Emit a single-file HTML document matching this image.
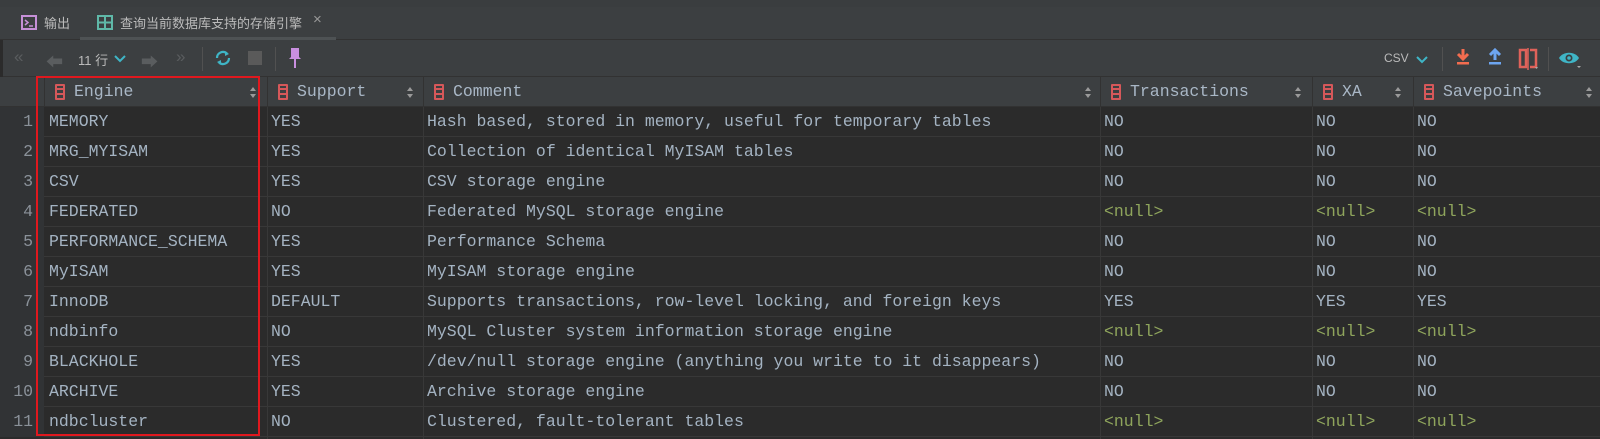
<!DOCTYPE html>
<html><head><meta charset="utf-8"><style>
*{margin:0;padding:0;box-sizing:border-box}
body{width:1600px;height:439px;background:#2b2b2b;overflow:hidden;position:relative;font-family:"Liberation Sans","Noto Sans CJK SC",sans-serif;color:#a9b7c6}
.abs{position:absolute}
#tabs{left:0;top:0;width:1600px;height:40px;background:#3c3f41;border-bottom:1px solid #323232}
#tb{left:0;top:40px;width:1600px;height:37px;background:#3c3f41;border-bottom:1px solid #323232}
.sep{position:absolute;top:7px;width:1px;height:24px;background:#515151}
#hdr{left:0;top:77px;width:1600px;height:30px;background:#3c3f41;border-bottom:1px solid #323232}
.hc{position:absolute;top:0;height:30px;border-left:1px solid #323232;font:16.5px "Liberation Mono",monospace;color:#a9b7c6;line-height:30px}
.hc .ic{position:absolute;left:10px;top:7px;width:10px;height:16px;border:2px solid #d6585a;border-radius:1px}
.hc .ic:before,.hc .ic:after{content:"";position:absolute;left:0;right:0;height:2px;background:#d6585a}
.hc .ic:before{top:2px}.hc .ic:after{top:7px}
.hc .t{position:absolute;left:29px}
.row{position:absolute;left:0;width:1600px;height:30px;border-bottom:1px solid #383838;font:16.5px "Liberation Mono",monospace;line-height:30px;color:#a4b3c2}
.row span{position:absolute;top:0;height:30px;white-space:pre}
.rn{left:0;width:44px;background:#313335;text-align:right;padding-right:11px;color:#8a9199}
.n{color:#8fa55c}
.vl{position:absolute;top:107px;height:332px;width:1px;background:#383838}
</style></head><body>
<div id="tabs" class="abs">
 <div class="abs" style="left:0;top:0;width:1600px;height:7px;background:#3a3d3f"></div>
 <svg class="abs" style="left:21px;top:15px" width="16" height="16"><rect x="1" y="1" width="14" height="13" fill="none" stroke="#c690d8" stroke-width="2"/><path d="M4 5l3 2.5-3 2.5M8 11h4" stroke="#c690d8" stroke-width="1.5" fill="none"/></svg>
 <div class="abs" style="left:44px;top:13px;font-size:13px;color:#bbb">输出</div>
 <svg class="abs" style="left:97px;top:15px" width="16" height="16"><rect x="1" y="1" width="14" height="13" fill="none" stroke="#5fb8a8" stroke-width="2"/><path d="M1 7.5h14M8 1v13" stroke="#5fb8a8" stroke-width="2"/></svg>
 <div class="abs" style="left:120px;top:13px;font-size:13px;color:#bbb">查询当前数据库支持的存储引擎</div>
 <div class="abs" style="left:313px;top:11px;font-size:15px;color:#999">×</div>
 <div class="abs" style="left:80px;top:37px;width:256px;height:3px;background:#4e5254"></div>
</div>
<div id="tb" class="abs">
 <div class="abs" style="left:0;top:0;width:3px;height:37px;background:#2b2b2b"></div>
 <div class="abs" style="left:14px;top:7px;font-size:17px;color:#5a5d5f">«</div>
 <div class="abs" style="left:46px;top:8px;font-size:17px;color:#5a5d5f">⬅</div>
 <div class="abs" style="left:78px;top:10px;font-size:13px;color:#bbb">11 行</div>
 <svg class="abs" style="left:114px;top:15px" width="12" height="8"><path d="M1 1l5 5 5-5" stroke="#3fb5c6" stroke-width="2" fill="none"/></svg>
 <div class="abs" style="left:141px;top:8px;font-size:17px;color:#5a5d5f">➡</div>
 <div class="abs" style="left:176px;top:7px;font-size:17px;color:#5a5d5f">»</div>
 <div class="sep" style="left:202px"></div>
 <svg class="abs" style="left:213px;top:8px" width="20" height="20"><path d="M4 10a6 6 0 0 1 10-4.5M16 10a6 6 0 0 1-10 4.5" stroke="#3fb5c6" stroke-width="2.2" fill="none"/><path d="M12 3l4 3-4 2zM8 17l-4-3 4-2z" fill="#3fb5c6"/></svg>
 <div class="abs" style="left:248px;top:11px;width:14px;height:14px;background:#5a5a5a"></div>
 <div class="sep" style="left:275px"></div>
 <svg class="abs" style="left:287px;top:7px" width="16" height="22"><path d="M4 1h8v9l2 2H2l2-2z" fill="#c98fe0"/><path d="M8 12v9" stroke="#c98fe0" stroke-width="2"/></svg>
 <div class="abs" style="left:1384px;top:11px;font-size:12px;color:#bbb">CSV</div>
 <svg class="abs" style="left:1416px;top:16px" width="12" height="8"><path d="M1 1l5 5 5-5" stroke="#3fb5c6" stroke-width="2" fill="none"/></svg>
 <div class="sep" style="left:1442px"></div>
 <svg class="abs" style="left:1455px;top:8px" width="16" height="20"><path d="M8 1v9M3 6l5 5 5-5" stroke="#f26c4f" stroke-width="3" fill="none"/><rect x="2" y="14" width="12" height="2.5" fill="#f26c4f"/></svg>
 <svg class="abs" style="left:1487px;top:8px" width="16" height="20"><path d="M8 12V3M3 7l5-5 5 5" stroke="#6da5f0" stroke-width="3" fill="none"/><rect x="2" y="14" width="12" height="2.5" fill="#6da5f0"/></svg>
 <svg class="abs" style="left:1518px;top:7px" width="22" height="24"><path d="M2 3h6v17H2zM12 3h6v17h-6" fill="none" stroke="#e0625a" stroke-width="2.5"/><path d="M10 1v22" stroke="#e0625a" stroke-width="1.5"/><path d="M17 20l3 0-1.5 2z" fill="#aaa"/></svg>
 <div class="sep" style="left:1548px"></div>
 <svg class="abs" style="left:1558px;top:10px" width="24" height="20"><path d="M1 8C5 1 17 1 21 8 17 15 5 15 1 8z" fill="#3fb5c6"/><circle cx="11" cy="8" r="3.5" fill="#3c3f41"/><circle cx="11" cy="8" r="1.8" fill="#3fb5c6"/><path d="M19 16l4 0-2 2z" fill="#aaa"/></svg>
</div>
<div id="hdr" class="abs">
 <div class="hc" style="left:44px;width:223px"><i class="ic"></i><span class="t">Engine</span></div>
 <div class="hc" style="left:267px;width:156px"><i class="ic"></i><span class="t">Support</span></div>
 <div class="hc" style="left:423px;width:677px"><i class="ic"></i><span class="t">Comment</span></div>
 <div class="hc" style="left:1100px;width:212px"><i class="ic"></i><span class="t">Transactions</span></div>
 <div class="hc" style="left:1312px;width:101px"><i class="ic"></i><span class="t">XA</span></div>
 <div class="hc" style="left:1413px;width:187px"><i class="ic"></i><span class="t">Savepoints</span></div>
</div>
<svg class="abs" style="left:0;top:86px" width="1600" height="14">
 <g fill="#9a9a9a"><path d="M253 1l3 4h-6zM253 12l3-4h-6z"/><path d="M410 1l3 4h-6zM410 12l3-4h-6z"/><path d="M1088 1l3 4h-6zM1088 12l3-4h-6z"/><path d="M1298 1l3 4h-6zM1298 12l3-4h-6z"/><path d="M1398 1l3 4h-6zM1398 12l3-4h-6z"/><path d="M1589 1l3 4h-6zM1589 12l3-4h-6z"/></g>
</svg>
<div id="rows">
<div class="row" style="top:107px"><span class="rn">1</span><span style="left:49px">MEMORY</span><span style="left:271px">YES</span><span style="left:427px">Hash based, stored in memory, useful for temporary tables</span><span style="left:1104px">NO</span><span style="left:1316px">NO</span><span style="left:1417px">NO</span></div>
<div class="row" style="top:137px"><span class="rn">2</span><span style="left:49px">MRG_MYISAM</span><span style="left:271px">YES</span><span style="left:427px">Collection of identical MyISAM tables</span><span style="left:1104px">NO</span><span style="left:1316px">NO</span><span style="left:1417px">NO</span></div>
<div class="row" style="top:167px"><span class="rn">3</span><span style="left:49px">CSV</span><span style="left:271px">YES</span><span style="left:427px">CSV storage engine</span><span style="left:1104px">NO</span><span style="left:1316px">NO</span><span style="left:1417px">NO</span></div>
<div class="row" style="top:197px"><span class="rn">4</span><span style="left:49px">FEDERATED</span><span style="left:271px">NO</span><span style="left:427px">Federated MySQL storage engine</span><span class="n" style="left:1104px">&lt;null&gt;</span><span class="n" style="left:1316px">&lt;null&gt;</span><span class="n" style="left:1417px">&lt;null&gt;</span></div>
<div class="row" style="top:227px"><span class="rn">5</span><span style="left:49px">PERFORMANCE_SCHEMA</span><span style="left:271px">YES</span><span style="left:427px">Performance Schema</span><span style="left:1104px">NO</span><span style="left:1316px">NO</span><span style="left:1417px">NO</span></div>
<div class="row" style="top:257px"><span class="rn">6</span><span style="left:49px">MyISAM</span><span style="left:271px">YES</span><span style="left:427px">MyISAM storage engine</span><span style="left:1104px">NO</span><span style="left:1316px">NO</span><span style="left:1417px">NO</span></div>
<div class="row" style="top:287px"><span class="rn">7</span><span style="left:49px">InnoDB</span><span style="left:271px">DEFAULT</span><span style="left:427px">Supports transactions, row-level locking, and foreign keys</span><span style="left:1104px">YES</span><span style="left:1316px">YES</span><span style="left:1417px">YES</span></div>
<div class="row" style="top:317px"><span class="rn">8</span><span style="left:49px">ndbinfo</span><span style="left:271px">NO</span><span style="left:427px">MySQL Cluster system information storage engine</span><span class="n" style="left:1104px">&lt;null&gt;</span><span class="n" style="left:1316px">&lt;null&gt;</span><span class="n" style="left:1417px">&lt;null&gt;</span></div>
<div class="row" style="top:347px"><span class="rn">9</span><span style="left:49px">BLACKHOLE</span><span style="left:271px">YES</span><span style="left:427px">/dev/null storage engine (anything you write to it disappears)</span><span style="left:1104px">NO</span><span style="left:1316px">NO</span><span style="left:1417px">NO</span></div>
<div class="row" style="top:377px"><span class="rn">10</span><span style="left:49px">ARCHIVE</span><span style="left:271px">YES</span><span style="left:427px">Archive storage engine</span><span style="left:1104px">NO</span><span style="left:1316px">NO</span><span style="left:1417px">NO</span></div>
<div class="row" style="top:407px"><span class="rn">11</span><span style="left:49px">ndbcluster</span><span style="left:271px">NO</span><span style="left:427px">Clustered, fault-tolerant tables</span><span class="n" style="left:1104px">&lt;null&gt;</span><span class="n" style="left:1316px">&lt;null&gt;</span><span class="n" style="left:1417px">&lt;null&gt;</span></div>
</div>
<div class="vl" style="left:267px"></div><div class="vl" style="left:423px"></div><div class="vl" style="left:1100px"></div><div class="vl" style="left:1312px"></div><div class="vl" style="left:1413px"></div>
<div class="abs" style="left:36px;top:76px;width:224px;height:360px;border:2px solid #e0181e"></div>
</body></html>
